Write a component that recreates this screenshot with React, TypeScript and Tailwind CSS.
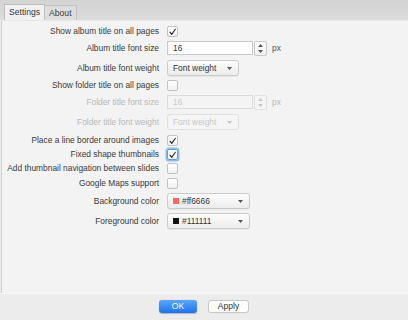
import React from 'react';

const Check = () => (
  <svg width="10" height="10" viewBox="0 0 10 10" className="block">
    <path d="M2.2 5.2 L4.1 7.6 L8.2 1.9" fill="none" stroke="#262626" strokeWidth="1.2" strokeLinecap="round" strokeLinejoin="round" />
  </svg>
);

const Checkbox: React.FC<{ checked?: boolean; focus?: boolean }> = ({ checked, focus }) => (
  <div
    className={
      'w-[11px] h-[11px] rounded-[2px] border bg-gradient-to-b from-white to-[#f1f1f1] flex items-center justify-center ' +
      (focus ? 'border-[#5f9de6] ring-[1.5px] ring-[#8fbbf0]' : 'border-[#c2c2c2]')
    }
  >
    {checked && <Check />}
  </div>
);

const Caret: React.FC<{ disabled?: boolean }> = ({ disabled }) => (
  <svg width="5" height="3" viewBox="0 0 5 3" className="block">
    <path d="M0 0 H5 L2.5 3 Z" fill={disabled ? '#c4c4c4' : '#555'} />
  </svg>
);

const NumberField: React.FC<{ disabled?: boolean }> = ({ disabled }) => (
  <div className="flex items-center h-[14px]">
    <div
      className={
        'w-[86px] h-[14px] border flex items-center pl-[5px] ' +
        (disabled ? 'bg-[#f4f4f4] border-[#dcdcdc] text-[#c8c8c8]' : 'bg-white border-[#c9c9c9] text-[#333]')
      }
    >
      16
    </div>
    <div
      className={
        'w-[13px] h-[15px] ml-[1px] rounded-[2px] border flex flex-col items-center justify-center gap-[3px] ' +
        (disabled ? 'border-[#e2e2e2] bg-[#f5f5f5]' : 'border-[#c9c9c9] bg-gradient-to-b from-white to-[#efefef]')
      }
    >
      <svg width="5" height="3" viewBox="0 0 5 3" className="block">
        <path d="M0 3 H5 L2.5 0 Z" fill={disabled ? '#c8c8c8' : '#555'} />
      </svg>
      <svg width="5" height="3" viewBox="0 0 5 3" className="block">
        <path d="M0 0 H5 L2.5 3 Z" fill={disabled ? '#c8c8c8' : '#555'} />
      </svg>
    </div>
    <span className={'ml-[5px] ' + (disabled ? 'text-[#b8b8b8]' : 'text-[#555]')}>px</span>
  </div>
);

const Select: React.FC<{ disabled?: boolean; width: string; swatch?: string; label: string }> = ({
  disabled,
  width,
  swatch,
  label,
}) => (
  <div
    className={
      width +
      ' h-[16px] rounded-[3px] border flex items-center pl-[5px] pr-[6px] ' +
      (disabled
        ? 'border-[#e0e0e0] bg-[#f5f5f5] text-[#c8c8c8]'
        : 'border-[#cbcbcb] bg-gradient-to-b from-[#fdfdfd] to-[#ececec] text-[#333] shadow-[0_0.5px_0_#d8d8d8]')
    }
  >
    {swatch && <span className={'w-[6px] h-[6px] mr-[3px] ' + swatch} />}
    <span className="flex-1">{label}</span>
    <Caret disabled={disabled} />
  </div>
);

const Row: React.FC<{ label: string; disabled?: boolean; mt: string; children: React.ReactNode }> = ({
  label,
  disabled,
  mt,
  children,
}) => (
  <div className={'flex items-center ' + mt}>
    <div className={'w-[157px] text-right whitespace-nowrap ' + (disabled ? 'text-[#b8b8b8]' : 'text-[#3a3a3a]')}>
      {label}
    </div>
    <div className="ml-[8px] flex items-center">{children}</div>
  </div>
);

export default function App() {
  return (
    <div className="w-[408px] h-[320px] bg-[#ececec] flex flex-col font-['Liberation_Sans',Arial,sans-serif] text-[8.4px] leading-none overflow-hidden">
      <div className="h-[21px] bg-gradient-to-b from-[#d3d3d3] to-[#dcdcdc] flex items-end pl-[4px] border-b border-[#e6e6e6]">
        <div className="h-[16px] px-[4px] flex items-center bg-[#f1f1f1] border border-b-0 border-[#bdbdbd] text-[#333] text-[8.6px]">
          Settings
        </div>
        <div className="h-[15px] px-[4px] flex items-center bg-[#dedede] border-r border-t border-[#c2c2c2] text-[#3a3a3a] text-[8.6px]">
          About
        </div>
      </div>
      <div className="h-[272px] ml-[1px] bg-[#f3f3f3] border-l border-[#cfcfcf] pt-[5px]">
        <Row label="Show album title on all pages" mt="mt-0">
          <Checkbox checked />
        </Row>
        <Row label="Album title font size" mt="mt-[4px]">
          <NumberField />
        </Row>
        <Row label="Album title font weight" mt="mt-[5px]">
          <Select width="w-[72px]" label="Font weight" />
        </Row>
        <Row label="Show folder title on all pages" mt="mt-[4px]">
          <Checkbox />
        </Row>
        <Row label="Folder title font size" disabled mt="mt-[4px]">
          <NumberField disabled />
        </Row>
        <Row label="Folder title font weight" disabled mt="mt-[5px]">
          <Select width="w-[72px]" label="Font weight" disabled />
        </Row>
        <Row label="Place a line border around images" mt="mt-[5px]">
          <Checkbox checked />
        </Row>
        <Row label="Fixed shape thumbnails" mt="mt-[3px]">
          <Checkbox checked focus />
        </Row>
        <Row label="Add thumbnail navigation between slides" mt="mt-[3px]">
          <Checkbox />
        </Row>
        <Row label="Google Maps support" mt="mt-[4px]">
          <Checkbox />
        </Row>
        <Row label="Background color" mt="mt-[4px]">
          <Select width="w-[83px]" label="#ff6666" swatch="bg-[#ff6666]" />
        </Row>
        <Row label="Foreground color" mt="mt-[4px]">
          <Select width="w-[83px]" label="#111111" swatch="bg-[#111111]" />
        </Row>
      </div>
      <div className="flex-1 flex items-center justify-center gap-[11px] pb-[1px] border-t border-[#f7f7f7]">
        <button className="w-[38px] h-[13px] rounded-[3px] bg-gradient-to-b from-[#5aa5fb] to-[#1b73f0] text-white text-[8.6px] leading-none shadow-[0_0.5px_1px_rgba(0,0,0,0.25)]">
          OK
        </button>
        <button className="w-[41px] h-[13px] rounded-[3px] bg-white border border-[#c6c6c6] text-[#333] text-[8.6px] leading-none">
          Apply
        </button>
      </div>
    </div>
  );
}
